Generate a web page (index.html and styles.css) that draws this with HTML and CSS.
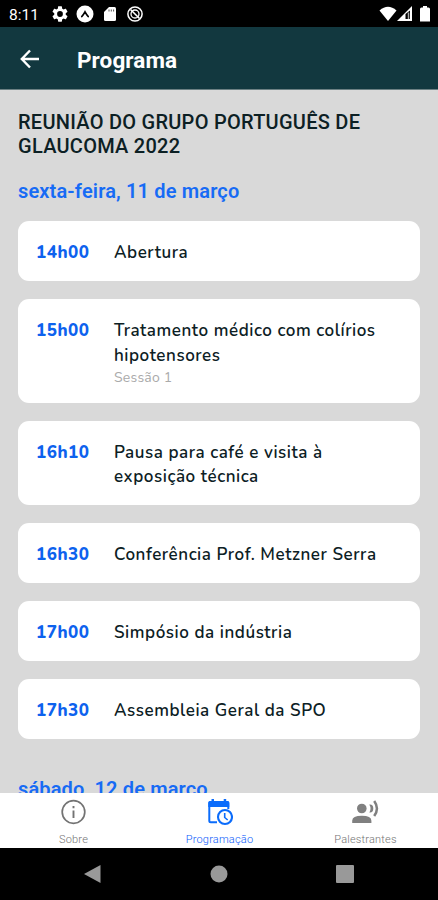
FILE: index.html
```html
<!DOCTYPE html>
<html lang="pt">
<head>
  <meta charset="UTF-8">
  <meta name="viewport" content="width=device-width, initial-scale=1">
  <title>Programa</title>
  <link rel="stylesheet" href="styles.css">
</head>
<body>

<!-- Status bar -->
<div class="status-bar">
  <span class="clock">8:11</span>
  <svg class="gear" width="16" height="16" viewBox="2 2 20 20"><path fill="#fff" d="M19.14 12.94c.04-.3.06-.61.06-.94 0-.32-.02-.64-.07-.94l2.03-1.58a.49.49 0 0 0 .12-.61l-1.92-3.32a.49.49 0 0 0-.59-.22l-2.39.96c-.5-.38-1.03-.7-1.62-.94l-.36-2.54a.48.48 0 0 0-.48-.41h-3.84c-.24 0-.43.17-.47.41l-.36 2.54c-.59.24-1.13.57-1.62.94l-2.39-.96a.48.48 0 0 0-.59.22L2.74 8.87c-.12.21-.08.47.12.61l2.03 1.58c-.05.3-.09.63-.09.94s.02.64.07.94l-2.03 1.58a.49.49 0 0 0-.12.61l1.92 3.32c.12.22.37.29.59.22l2.39-.96c.5.38 1.03.7 1.62.94l.36 2.54c.05.24.24.41.48.41h3.84c.24 0 .44-.17.47-.41l.36-2.54c.59-.24 1.13-.56 1.62-.94l2.39.96c.22.08.47 0 .59-.22l1.92-3.32a.49.49 0 0 0-.12-.61zM12 15.600a3.600 3.600 0 1 1 0-7.200 3.600 3.600 0 0 1 0 7.200z"/></svg>
  <svg class="expo" width="18" height="18" viewBox="0 0 18 18"><circle cx="9" cy="9" r="8.500" fill="#fff"/><path d="M5.800 11.600Q7.800 9 9 6.800q1.200 2.200 3.200 4.800" fill="none" stroke="#000" stroke-width="1.700" stroke-linecap="round"/></svg>
  <svg class="sd" width="12" height="16" viewBox="0 0 12 16"><path fill="#fff" d="M5 1h5.500Q12 1 12 2.500v11q0 1.500-1.500 1.500h-9Q0 15 0 13.500V6z"/><path d="M5 3.500V5.500M7.300 3.500V5.500M9.600 3.500V5.500" stroke="#555" stroke-width="1"/></svg>
  <svg class="dnd" width="16" height="16" viewBox="0 0 16 16" fill="none" stroke="#fff"><circle cx="8" cy="8" r="7.100" stroke-width="1.500"/><circle cx="8" cy="8" r="4" stroke-width="1.300"/><path d="M3.500 3.500l9 9" stroke-width="1.600"/></svg>
  <div class="signals">
    <svg width="18" height="16" viewBox="0 0 18 16"><path fill="#fff" d="M.5 4.500Q9-3 17.500 4.500L9 15z"/></svg>
    <svg width="16" height="16" viewBox="0 0 16 16"><path fill="#fff" d="M0 15L15 0v15z"/><path fill="#000" d="M8.500 8L13 4.500V13H8.500z"/><path d="M11.500 6.500V13" stroke="#aaa" stroke-width="1.500"/></svg>
    <svg class="battery" width="10" height="16" viewBox="0 0 10 16"><path fill="#fff" d="M3 0h4v1.500h1.500Q10 1.500 10 3v12.500H0V3q0-1.500 1.500-1.500H3z"/></svg>
  </div>
</div>

<div class="header">
  <svg width="20" height="20" viewBox="0 0 20 20" fill="none" stroke="#fff" stroke-width="2.400"><path d="M19 10H2M10 1.500L1.800 10l8.200 8.500"/></svg>
  <h1>Programa</h1>
</div>

<div class="content">
  <h2>REUNIÃO DO GRUPO PORTUGUÊS DE GLAUCOMA 2022</h2>
  <h3>sexta-feira, 11 de março</h3>

  <ul class="schedule">
    <li><span class="time">14h00</span><div class="talk">Abertura</div></li>
    <li><span class="time">15h00</span><div class="talk">Tratamento médico com colírios hipotensores<small>Sessão 1</small></div></li>
    <li><span class="time">16h10</span><div class="talk">Pausa para café e visita à<br>exposição técnica</div></li>
    <li><span class="time">16h30</span><div class="talk">Conferência Prof. Metzner Serra</div></li>
    <li><span class="time">17h00</span><div class="talk">Simpósio da indústria</div></li>
    <li><span class="time">17h30</span><div class="talk">Assembleia Geral da SPO</div></li>
  </ul>

  <h3 class="next-day">sábado, 12 de março</h3>
</div>

<!-- Bottom tabs -->
<div class="tabs">
  <div class="tab">
    <svg width="28" height="28" viewBox="0 0 28 28"><circle cx="14.500" cy="14" r="11.300" fill="none" stroke="#737373" stroke-width="1.700"/><path d="M14.500 12.500V20M14.500 8v2.300" stroke="#737373" stroke-width="1.900"/></svg>
    <span>Sobre</span>
  </div>
  <div class="tab active">
    <svg width="28" height="28" viewBox="0 0 28 28" fill="none" stroke="#0b6cfb"><path d="M12 24.300H5.800Q4.300 24.300 4.300 22.800V5.500Q4.300 4 5.800 4h16Q23.300 4 23.300 5.500V11" stroke-width="2"/><path fill="#0b6cfb" stroke="none" d="M3.300 4.500q0-1.500 1.500-1.500h18q1.500 0 1.500 1.500V9h-21zM6.500 1h2.500v4H6.500zM18.700 1h2.500v4h-2.500z"/><circle cx="20" cy="19" r="7" fill="#fff" stroke-width="2.100"/><path d="M19.700 15v4.500l3 2.500" stroke-width="1.600"/></svg>
    <span>Programação</span>
  </div>
  <div class="tab">
    <svg width="28" height="28" viewBox="0 0 28 28"><circle cx="10.800" cy="10.500" r="4.800" fill="#808080"/><path fill="#808080" d="M1.200 25v-2.300q0-5 9.600-5t9.600 5V25z"/><path fill="#808080" d="M18.300 6.500q4-.5 4 4t-4 4q2.400-4 0-8z"/><path d="M23.200 3q5.500 7.500 0 15" fill="none" stroke="#808080" stroke-width="2.500"/></svg>
    <span>Palestrantes</span>
  </div>
</div>

<div class="nav-bar">
  <svg width="18" height="20" viewBox="0 0 18 20"><path fill="#999" d="M0 10L16.500 1v18z"/></svg>
  <svg width="18" height="18" viewBox="0 0 18 18"><circle cx="9" cy="9" r="8.500" fill="#999"/></svg>
  <svg width="18" height="18" viewBox="0 0 18 18"><rect width="18" height="18" rx="1" fill="#999"/></svg>
</div>

</body>
</html>
```
FILE: styles.css
```css
* {
  box-sizing: border-box;
}

body {
  margin: 0;
  height: 900px;
  display: flex;
  flex-direction: column;
  overflow: hidden;
  font-family: Roboto, sans-serif;
  background: #d9d9d9;
}

svg {
  display: block;
  flex-shrink: 0;
}

.status-bar {
  display: flex;
  align-items: center;
  height: 27px;
  padding: 1px 8px 0 9px;
  background: #000;
  color: #fff;
}

.clock {
  width: 43px;
  padding-top: 1px;
  font-size: 15.5px;
}

.expo {
  margin-left: 8px;
}

.sd {
  margin-left: 10px;
}

.dnd {
  margin-left: 11px;
}

.signals {
  display: flex;
  margin-left: auto;
}

.battery {
  margin-left: 7px;
}

.header {
  display: flex;
  align-items: center;
  height: 63px;
  padding: 1px 20px 0;
  border-bottom: 1px solid #6c8083;
  background: #12383f;
  color: #fff;
}

.header h1 {
  margin: 2px 0 0 37px;
  font-size: 22.5px;
  font-weight: 700;
  letter-spacing: 0.1px;
}

.content {
  height: 703px;
  padding: 21px 18px 0;
  overflow: hidden;
}

h2 {
  margin: 0;
  font-size: 20px;
  line-height: 23.5px;
  font-weight: 500;
  letter-spacing: 0.26px;
  color: #0c2024;
}

h3 {
  margin: 21px 0 18px;
  font-size: 20px;
  line-height: 24px;
  font-weight: 600;
  letter-spacing: 0.15px;
  color: #176bf5;
}

.schedule {
  display: flex;
  flex-direction: column;
  gap: 18px;
  margin: 0;
  padding: 0;
  list-style: none;
}

.schedule li {
  display: flex;
  padding: 20px 18px 15.5px;
  border-radius: 11px;
  background: #fff;
  line-height: 24.5px;
}

.time {
  width: 78px;
  flex-shrink: 0;
  font-family: Nunito, "Open Sans", sans-serif;
  font-size: 17px;
  font-weight: 800;
  letter-spacing: 0.5px;
  color: #0d62ee;
}

.talk {
  font-family: Nunito, "Open Sans", sans-serif;
  font-size: 17px;
  font-weight: 600;
  letter-spacing: 0.55px;
  color: #0c2024;
}

.talk small {
  display: block;
  font-size: 14px;
  line-height: 19px;
  font-weight: 400;
  letter-spacing: 0.2px;
  color: #aaa;
}

.next-day {
  margin-top: 38px;
}

.tabs {
  display: flex;
  height: 55px;
  background: #fff;
}

.tab {
  flex: 1;
  display: flex;
  flex-direction: column;
  align-items: center;
  padding-top: 5px;
  font-size: 11px;
  font-weight: 300;
  letter-spacing: 0.2px;
  color: #737373;
}

.tab span {
  margin: 7px 0 0 1px;
}

.tab.active {
  color: #0b5cfb;
}

.nav-bar {
  display: flex;
  align-items: center;
  justify-content: space-between;
  height: 52px;
  padding: 0 84px;
  background: #000;
}
```
